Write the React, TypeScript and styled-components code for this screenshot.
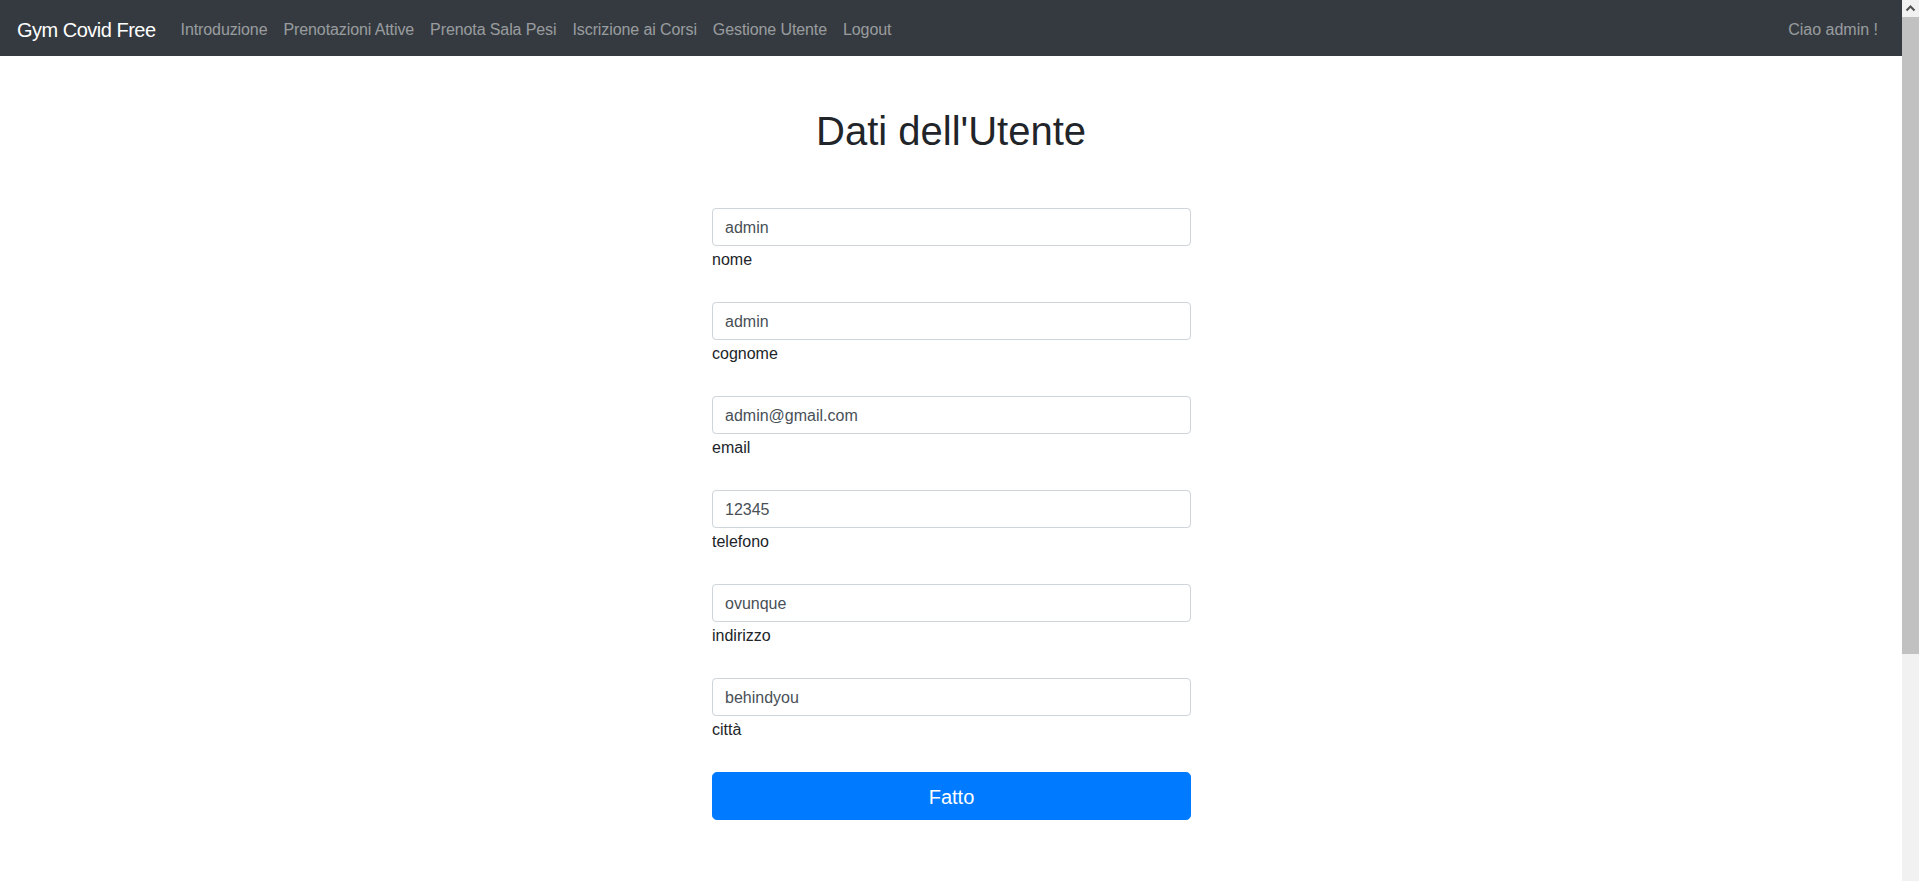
import React from "react";
import styled, { createGlobalStyle } from "styled-components";

const GlobalStyle = createGlobalStyle`
  html, body {
    margin: 0;
    padding: 0;
    height: 100%;
    overflow: hidden;
    background: #ffffff;
  }
  body {
    font-family: "Liberation Sans", Arial, sans-serif;
    color: #212529;
    font-size: 16px;
    line-height: 1.5;
  }
  * { box-sizing: border-box; }
`;

const Shell = styled.div`
  display: flex;
  height: 100vh;
  width: 100vw;
`;

const Viewport = styled.div`
  flex: 1;
  min-width: 0;
  overflow: hidden;
  background: #ffffff;
`;

const ScrollTrack = styled.div`
  width: 17px;
  flex: none;
  display: flex;
  flex-direction: column;
  background: #f1f1f1;
`;

const ScrollArrow = styled.div`
  height: 17px;
  display: flex;
  align-items: center;
  justify-content: center;
`;

const ScrollThumb = styled.div`
  height: 637px;
  background: #c1c1c1;
`;

const Navbar = styled.nav`
  height: 56px;
  background: #343a40;
  display: flex;
  align-items: center;
  padding: 3px 16px 0;
`;

const Brand = styled.a`
  color: #ffffff;
  font-size: 20px;
  letter-spacing: -0.5px;
  line-height: 30px;
  margin-right: 17px;
  padding-left: 1px;
  text-decoration: none;
  white-space: nowrap;
`;

const NavList = styled.div`
  display: flex;
  align-items: center;
  flex: 1;
`;

const NavLink = styled.a<{ $push?: boolean }>`
  color: rgba(255, 255, 255, 0.5);
  font-size: 16px;
  line-height: 24px;
  letter-spacing: ${(p) => (p.$push ? "0" : "-0.1px")};
  padding: 8px;
  text-decoration: none;
  white-space: nowrap;
  margin-left: ${(p) => (p.$push ? "auto" : "0")};
`;

const Title = styled.h1`
  margin: 51px 0 0;
  font-size: 40px;
  line-height: 48px;
  font-weight: 400;
  text-align: center;
  color: #212529;
`;

const Form = styled.form`
  width: 479px;
  margin: 53px 0 0 calc(50% - 239px);
  display: flex;
  flex-direction: column;
`;

const Field = styled.div`
  display: flex;
  flex-direction: column;
  margin-bottom: 30px;
`;

const Input = styled.input`
  height: 38px;
  width: 100%;
  padding: 7px 12px 5px;
  border: 1px solid #ced4da;
  border-radius: 4px;
  font-family: inherit;
  font-size: 16px;
  line-height: 24px;
  color: #495057;
  background: #ffffff;
  outline: none;
`;

const Label = styled.label`
  font-size: 16px;
  line-height: 24px;
  padding-top: 2px;
  color: #212529;
`;

const Submit = styled.button`
  height: 48px;
  width: 100%;
  padding: 1px 16px 0;
  border: 1px solid #007bff;
  border-radius: 4.8px;
  background: #007bff;
  color: #ffffff;
  font-family: inherit;
  font-size: 20px;
  line-height: 30px;
  cursor: pointer;
`;

const fields = [
  { value: "admin", label: "nome" },
  { value: "admin", label: "cognome" },
  { value: "admin@gmail.com", label: "email" },
  { value: "12345", label: "telefono" },
  { value: "ovunque", label: "indirizzo" },
  { value: "behindyou", label: "città" },
];

const links = [
  "Introduzione",
  "Prenotazioni Attive",
  "Prenota Sala Pesi",
  "Iscrizione ai Corsi",
  "Gestione Utente",
  "Logout",
];

export default function App() {
  return (
    <>
      <GlobalStyle />
      <Shell>
        <Viewport>
          <Navbar>
            <Brand href="#">Gym Covid Free</Brand>
            <NavList>
              {links.map((l) => (
                <NavLink key={l} href="#">
                  {l}
                </NavLink>
              ))}
              <NavLink $push href="#">
                Ciao admin !
              </NavLink>
            </NavList>
          </Navbar>
          <Title>Dati dell'Utente</Title>
          <Form onSubmit={(e) => e.preventDefault()}>
            {fields.map((f, i) => (
              <Field key={i}>
                <Input id={`f${i}`} defaultValue={f.value} />
                <Label htmlFor={`f${i}`}>{f.label}</Label>
              </Field>
            ))}
            <Submit type="submit">Fatto</Submit>
          </Form>
        </Viewport>
        <ScrollTrack>
          <ScrollArrow>
            <svg width="17" height="17" viewBox="0 0 17 17">
              <polyline
                points="4.5,10.5 8.5,6.5 12.5,10.5"
                fill="none"
                stroke="#505050"
                strokeWidth="2"
              />
            </svg>
          </ScrollArrow>
          <ScrollThumb />
        </ScrollTrack>
      </Shell>
    </>
  );
}
